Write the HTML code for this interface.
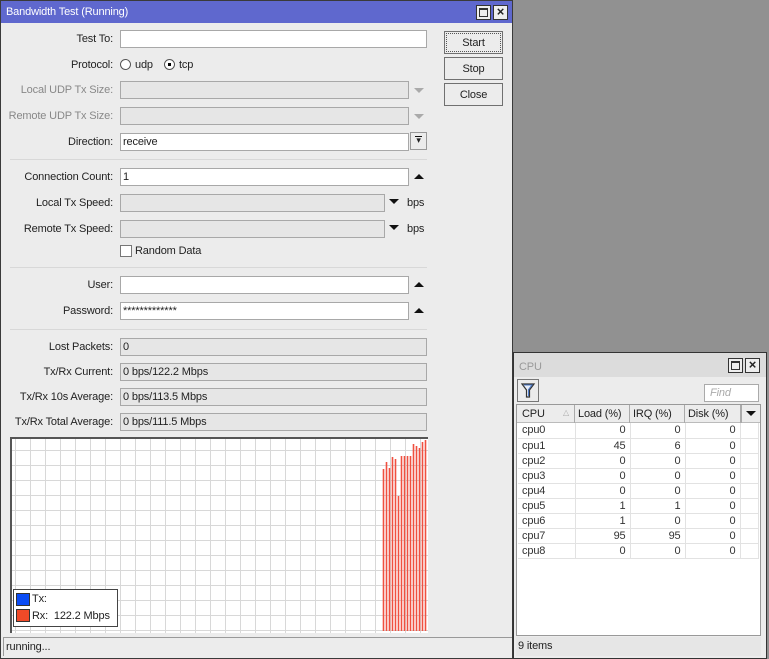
<!DOCTYPE html>
<html><head><style>
*{box-sizing:border-box;margin:0;padding:0}
body{width:769px;height:659px;background:#919191;position:relative;overflow:hidden;font-family:"Liberation Sans",sans-serif;font-size:11px;color:#222;letter-spacing:-0.15px}
.a{position:absolute}
.win{background:#ececec;border:1px solid #3a3a3a}
.lbl{position:absolute;text-align:right;width:113px;left:0;line-height:18px}
.dis{color:#888}
.in{position:absolute;height:18px;border:1px solid #a8a8a8;background:#fff;line-height:17px;padding-left:2px}
.ro{background:#e6e6e6}
.sep{position:absolute;left:10px;width:417px;height:1px;background:#d8d8d8}
.btn{position:absolute;left:444px;width:59px;height:23px;border:1px solid #707070;background:#ececec;text-align:center;line-height:22px}
.tri{position:absolute;width:0;height:0;border-left:5px solid transparent;border-right:5px solid transparent}
.up{border-bottom:5px solid #111}
.dn{border-top:5px solid #111}
.dng{border-top:5px solid #aaa}
.wb{position:absolute;width:15px;height:15px;border:1px solid #333;background:#eee;font-size:13px;line-height:12px;text-align:center;font-weight:bold}
table{border-collapse:collapse}
td{height:15px;border-right:1px solid #e2e2e2;border-bottom:1px solid #e2e2e2;padding:0 4px;line-height:14px;color:#333}
td.r{text-align:right}
</style></head><body>
<div class="a win" style="left:0;top:0;width:513px;height:659px"></div>
<div class="a" style="left:1px;top:1px;width:511px;height:22px;background:#5f68ce"></div>
<div class="a" style="left:6px;top:6px;color:#fff;font-size:11px">Bandwidth Test (Running)</div>
<div class="wb" style="left:476px;top:5px"><div style="width:9px;height:9px;border:1px solid #333;border-top-width:2px;margin:2px auto"></div></div>
<div class="wb" style="left:493px;top:5px">×</div>

<div class="lbl" style="top:30px">Test To:</div><div class="in" style="left:120px;top:30px;width:307px"></div>
<div class="lbl" style="top:56px">Protocol:</div>
<div class="a" style="left:120px;top:59px;width:11px;height:11px;border-radius:50%;border:1px solid #555;background:#fff"></div><div class="a" style="left:135px;top:56px;line-height:18px">udp</div>
<div class="a" style="left:164px;top:59px;width:11px;height:11px;border-radius:50%;border:1px solid #555;background:#fff"><div style="width:3px;height:3px;background:#000;margin:3px"></div></div><div class="a" style="left:179px;top:56px;line-height:18px">tcp</div>
<div class="lbl dis" style="top:81px">Local UDP Tx Size:</div><div class="in ro" style="left:120px;top:81px;width:289px"></div><div class="tri dng" style="left:414px;top:88px"></div>
<div class="lbl dis" style="top:107px">Remote UDP Tx Size:</div><div class="in ro" style="left:120px;top:107px;width:289px"></div><div class="tri dng" style="left:414px;top:114px"></div>
<div class="lbl" style="top:133px">Direction:</div><div class="in" style="left:120px;top:133px;width:289px">receive</div>
<div class="a" style="left:410px;top:132px;width:17px;height:18px;border:1px solid #999;background:#ececec;text-align:center;font-size:9px;line-height:15px">▾<div style="position:absolute;left:4px;top:3px;width:7px;height:1px;background:#111"></div></div>
<div class="sep" style="top:159px"></div>
<div class="lbl" style="top:168px">Connection Count:</div><div class="in" style="left:120px;top:168px;width:289px">1</div><div class="tri up" style="left:414px;top:174px"></div>
<div class="lbl" style="top:194px">Local Tx Speed:</div><div class="in ro" style="left:120px;top:194px;width:265px"></div><div class="tri dn" style="left:389px;top:199px"></div><div class="a" style="left:407px;top:197px">bps</div>
<div class="lbl" style="top:220px">Remote Tx Speed:</div><div class="in ro" style="left:120px;top:220px;width:265px"></div><div class="tri dn" style="left:389px;top:225px"></div><div class="a" style="left:407px;top:223px">bps</div>
<div class="a" style="left:120px;top:245px;width:12px;height:12px;border:1px solid #777;background:#fff"></div><div class="a" style="left:135px;top:245px">Random Data</div>
<div class="sep" style="top:267px"></div>
<div class="lbl" style="top:276px">User:</div><div class="in" style="left:120px;top:276px;width:289px"></div><div class="tri up" style="left:414px;top:282px"></div>
<div class="lbl" style="top:302px">Password:</div><div class="in" style="left:120px;top:302px;width:289px">*************</div><div class="tri up" style="left:414px;top:308px"></div>
<div class="sep" style="top:329px"></div>
<div class="lbl" style="top:338px">Lost Packets:</div><div class="in ro" style="left:120px;top:338px;width:307px">0</div>
<div class="lbl" style="top:363px">Tx/Rx Current:</div><div class="in ro" style="left:120px;top:363px;width:307px">0 bps/122.2 Mbps</div>
<div class="lbl" style="top:388px">Tx/Rx 10s Average:</div><div class="in ro" style="left:120px;top:388px;width:307px">0 bps/113.5 Mbps</div>
<div class="lbl" style="top:413px">Tx/Rx Total Average:</div><div class="in ro" style="left:120px;top:413px;width:307px">0 bps/111.5 Mbps</div>

<div class="btn" style="top:31px;outline:1px dotted #555;outline-offset:-3px">Start</div>
<div class="btn" style="top:57px">Stop</div>
<div class="btn" style="top:83px">Close</div>

<div class="a" style="left:10px;top:437px;width:418px;height:196px;background-color:#fff;border-left:2px solid #555;border-top:2px solid #555;background-image:linear-gradient(90deg,#d8d8d8 1px,transparent 1px),linear-gradient(#d8d8d8 1px,transparent 1px);background-size:15px 15px;background-position:3px 11px"></div>
<svg class="a" style="left:0;top:0" width="440" height="640">
<g stroke="#f05040" stroke-width="1.6">
<line x1="383.5" y1="469" x2="383.5" y2="631"/><line x1="386.5" y1="462" x2="386.5" y2="631"/><line x1="389.5" y1="468" x2="389.5" y2="631"/><line x1="392.5" y1="457" x2="392.5" y2="631"/><line x1="395.5" y1="459" x2="395.5" y2="631"/><line x1="398.5" y1="496" x2="398.5" y2="631"/><line x1="401.5" y1="456" x2="401.5" y2="631"/><line x1="404.5" y1="456" x2="404.5" y2="631"/><line x1="407.5" y1="456" x2="407.5" y2="631"/><line x1="410.5" y1="456" x2="410.5" y2="631"/><line x1="413.5" y1="444" x2="413.5" y2="631"/><line x1="416.5" y1="446" x2="416.5" y2="631"/><line x1="419.5" y1="448" x2="419.5" y2="631"/><line x1="422.5" y1="442" x2="422.5" y2="631"/><line x1="425.5" y1="440" x2="425.5" y2="631"/>
</g></svg>
<div class="a" style="left:13px;top:589px;width:105px;height:38px;border:1px solid #444;background:#fff"></div>
<div class="a" style="left:16px;top:593px;width:14px;height:13px;background:#0a4cf5;border:1px solid #333"></div><div class="a" style="left:32px;top:593px">Tx:</div>
<div class="a" style="left:16px;top:609px;width:14px;height:13px;background:#f04a28;border:1px solid #333"></div><div class="a" style="left:32px;top:610px">Rx:&nbsp; 122.2 Mbps</div>
<div class="a" style="left:3px;top:637px;width:509px;height:19px;border-top:1px solid #999;border-left:1px solid #999;padding:3px 0 0 2px">running...</div>

<div class="a win" style="left:513px;top:352px;width:254px;height:307px;border-width:1px;border-color:#333"></div>
<div class="a" style="left:514px;top:353px;width:252px;height:24px;background:#dcdcdc"></div>
<div class="a" style="left:519px;top:361px;color:#999;font-size:11px">CPU</div>
<div class="wb" style="left:728px;top:358px"><div style="width:9px;height:9px;border:1px solid #333;border-top-width:2px;margin:2px auto"></div></div>
<div class="wb" style="left:745px;top:358px">×</div>
<div class="a" style="left:517px;top:379px;width:22px;height:23px;border:1px solid #777;background:#ececec"><svg width="20" height="21"><path d="M4 4h12l-4.5 6v7h-3v-7z" fill="#e8eef8" stroke="#333" stroke-width="1.2"/><path d="M6 5h8l-3.5 4.5v6.5" fill="none" stroke="#4a78c8" stroke-width="1"/></svg></div>
<div class="a" style="left:704px;top:384px;width:55px;height:18px;border:1px solid #aaa;background:#fff;color:#aaa;font-style:italic;padding:2px 0 0 5px">Find</div>
<div class="a" style="left:516px;top:404px;width:245px;height:232px;background:#fff;border:1px solid #999"></div>
<div class="a" style="left:517px;top:405px;width:243px;height:18px;background:#ececec;border-bottom:1px solid #bbb"></div>
<div class="a" style="left:522px;top:408px">CPU</div><div class="a" style="left:563px;top:408px;color:#aaa;font-size:8px">△</div>
<div class="a" style="left:574px;top:405px;height:18px;border-left:1px solid #aaa;padding:3px 0 0 3px">Load (%)</div>
<div class="a" style="left:629px;top:405px;height:18px;border-left:1px solid #aaa;padding:3px 0 0 3px">IRQ (%)</div>
<div class="a" style="left:684px;top:405px;height:18px;border-left:1px solid #aaa;padding:3px 0 0 3px">Disk (%)</div>
<div class="a" style="left:740px;top:405px;width:2px;height:18px;border-left:1px solid #aaa;border-right:1px solid #aaa"></div>
<div class="tri dn" style="left:746px;top:411px"></div>
<table class="a" style="left:518px;top:423px;width:241px">
<colgroup><col style="width:57px"><col style="width:55px"><col style="width:55px"><col style="width:55px"><col></colgroup>
<tr><td>cpu0</td><td class="r">0</td><td class="r">0</td><td class="r">0</td><td></td></tr>
<tr><td>cpu1</td><td class="r">45</td><td class="r">6</td><td class="r">0</td><td></td></tr>
<tr><td>cpu2</td><td class="r">0</td><td class="r">0</td><td class="r">0</td><td></td></tr>
<tr><td>cpu3</td><td class="r">0</td><td class="r">0</td><td class="r">0</td><td></td></tr>
<tr><td>cpu4</td><td class="r">0</td><td class="r">0</td><td class="r">0</td><td></td></tr>
<tr><td>cpu5</td><td class="r">1</td><td class="r">1</td><td class="r">0</td><td></td></tr>
<tr><td>cpu6</td><td class="r">1</td><td class="r">0</td><td class="r">0</td><td></td></tr>
<tr><td>cpu7</td><td class="r">95</td><td class="r">95</td><td class="r">0</td><td></td></tr>
<tr><td>cpu8</td><td class="r">0</td><td class="r">0</td><td class="r">0</td><td></td></tr>
</table>
<div class="a" style="left:516px;top:637px;width:245px;height:19px;background:#e6e6e6;padding:3px 0 0 2px">9 items</div>
</body></html>
